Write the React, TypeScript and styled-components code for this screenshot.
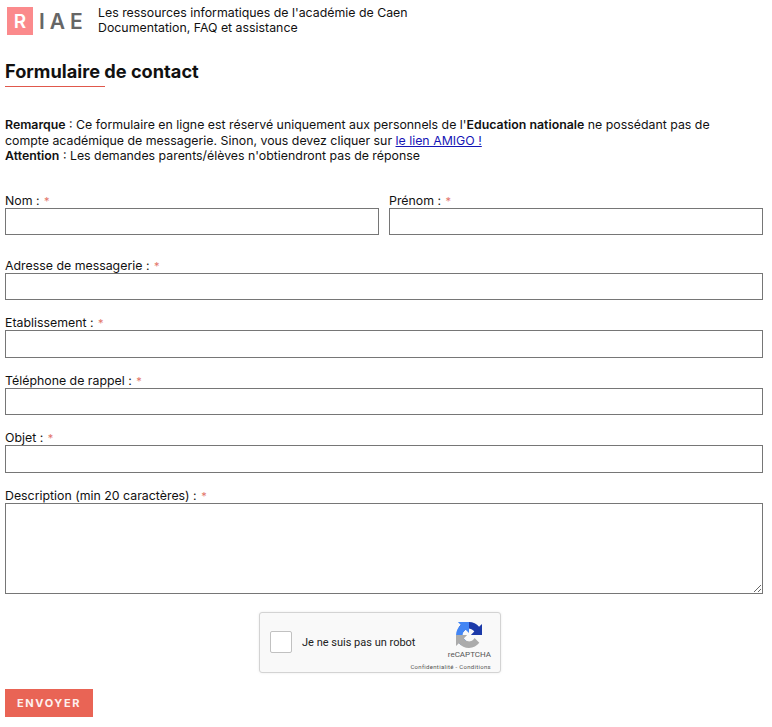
import React from 'react';
import styled, { createGlobalStyle } from 'styled-components';

const GlobalStyle = createGlobalStyle`
  html, body {
    margin: 0;
    padding: 0;
    background: #fff;
  }
  body {
    font-family: Inter, "Liberation Sans", sans-serif;
    font-size: 12.35px;
    color: #111;
  }
`;

const Page = styled.div`
  width: 772px;
  height: 727px;
  box-sizing: border-box;
  padding: 6px 9px 0 5px;
  overflow: hidden;
`;

const TopBar = styled.header`
  display: flex;
  align-items: flex-start;
  height: 29px;
`;

const Logo = styled.div`
  display: flex;
  align-items: center;
  width: 91px;
  padding-left: 2px;
  height: 28px;
  margin-top: 1px;
`;

const LogoSquare = styled.span`
  width: 26px;
  height: 28px;
  background: #fb8a8c;
  color: #fff;
  font-weight: 600;
  font-size: 19px;
  display: flex;
  align-items: center;
  justify-content: center;
`;

const LogoText = styled.span`
  margin-left: 6px;
  color: #666;
  font-weight: 600;
  font-size: 21px;
  letter-spacing: 5px;
`;

const Tagline = styled.div`
  font-size: 12.35px;
  line-height: 14.5px;
`;

const Title = styled.h1`
  margin: 24px 0 0;
  font-size: 18.2px;
  line-height: 24px;
  font-weight: 700;
  color: #111;
  padding-bottom: 3px;
`;

const TitleRule = styled.div`
  width: 100px;
  height: 1px;
  background: #e0584c;
`;

const Notice = styled.p`
  margin: 30px 0 0;
  line-height: 15.5px;
  font-size: 12.35px;
`;

const Strong = styled.strong`
  font-weight: 600;
`;

const NoticeLink = styled.a`
  color: #1515b5;
  text-decoration: underline;
`;

const Form = styled.form`
  margin-top: 28px;
  display: flex;
  flex-direction: column;
`;

const Row = styled.div<{ $wide?: boolean }>`
  display: flex;
  gap: 10px;
  margin-bottom: ${(p) => (p.$wide ? 22 : 14)}px;
`;

const Field = styled.label`
  display: flex;
  flex-direction: column;
  flex: 1;
  min-width: 0;
`;

const LabelText = styled.span`
  height: 15px;
  line-height: 17px;
  font-size: 12.35px;
  margin-bottom: 1px;
`;

const Star = styled.span`
  color: #e2746a;
  font-size: 11px;
  margin-left: 1px;
`;

const TextInput = styled.input<{ $tall?: boolean }>`
  box-sizing: border-box;
  width: 100%;
  height: ${(p) => (p.$tall ? 28 : 27)}px;
  border: 1px solid #767676;
  background: #fff;
  padding: 0 4px;
  margin: 0;
  outline: none;
`;

const TextArea = styled.textarea`
  display: block;
  box-sizing: border-box;
  width: 100%;
  height: 91px;
  border: 1px solid #767676;
  background: #fff;
  padding: 4px;
  margin: 0;
  outline: none;
`;

const CaptchaRow = styled.div`
  display: flex;
  justify-content: center;
  margin: 4px 8px 16px 0;
`;

const Captcha = styled.div`
  box-sizing: border-box;
  width: 242px;
  height: 61px;
  display: flex;
  align-items: center;
  background: #f9f9f9;
  border: 1px solid #d3d3d3;
  border-radius: 3px;
  box-shadow: 0 0 3px rgba(0, 0, 0, 0.08);
  font-family: Roboto, "Liberation Sans", sans-serif;
`;

const CaptchaBox = styled.span`
  box-sizing: border-box;
  width: 22px;
  height: 22px;
  margin-left: 10px;
  background: #fff;
  border: 1px solid #c1c1c1;
  border-radius: 2px;
`;

const CaptchaLabel = styled.span`
  margin-left: 10px;
  font-size: 11px;
  color: #222;
  white-space: nowrap;
  flex: 1;
`;

const CaptchaBrand = styled.div`
  display: flex;
  flex-direction: column;
  align-items: flex-end;
  padding: 9px 9px 0 0;
  height: 100%;
  width: 60px;
  box-sizing: border-box;
`;

const CaptchaMark = styled.svg`
  width: 26px;
  height: 26px;
  margin-right: 9px;
  flex: none;
`;

const BrandName = styled.span`
  font-size: 8px;
  line-height: 10px;
  margin-top: 2px;
  color: #555;
`;

const BrandLinks = styled.span`
  font-size: 6px;
  line-height: 9px;
  margin-top: 2px;
  letter-spacing: 0.3px;
  color: #555;
  white-space: nowrap;
`;

const SubmitButton = styled.button`
  width: 88px;
  height: 28px;
  border: 0;
  padding: 0;
  background: #e96455;
  color: #fdf0ee;
  font-family: Inter, "Liberation Sans", sans-serif;
  font-size: 11px;
  font-weight: 700;
  letter-spacing: 1.6px;
  text-transform: uppercase;
`;

const arrowPath =
  'M64 32l0-1.4V4.7l-7.2 7.2C50.9 4.7 42 .1 32 .1c-10.4 0-19.6 5-25.4 12.6l11.7 11.9a15.5 15.5 0 0 1 4.8-5.3c2-1.6 5-3 9-3 .5 0 .9.1 1.1.2 5 .4 9.3 3.1 11.8 7.1L36.7 32z';

const RecaptchaIcon: React.FC = () => (
  <CaptchaMark viewBox="0 0 64 64">
    <path d={arrowPath} fill="#1c3aa9" />
    <path d={arrowPath} fill="#4285f4" transform="rotate(-90 32 32)" />
    <path d={arrowPath} fill="#ababab" transform="rotate(180 32 32)" />
  </CaptchaMark>
);

const Required: React.FC<{ label: string }> = ({ label }) => (
  <LabelText>
    {label} : <Star>*</Star>
  </LabelText>
);

const App: React.FC = () => {
  return (
    <Page>
      <GlobalStyle />
      <TopBar>
        <Logo>
          <LogoSquare>R</LogoSquare>
          <LogoText>IAE</LogoText>
        </Logo>
        <Tagline>
          Les ressources informatiques de l'académie de Caen
          <br />
          Documentation, FAQ et assistance
        </Tagline>
      </TopBar>

      <Title>Formulaire de contact</Title>
      <TitleRule />

      <Notice>
        <Strong>Remarque</Strong> : Ce formulaire en ligne est réservé uniquement aux personnels de l'
        <Strong>Education nationale</Strong> ne possédant pas de
        <br />
        compte académique de messagerie. Sinon, vous devez cliquer sur{' '}
        <NoticeLink href="#">le lien AMIGO !</NoticeLink>
        <br />
        <Strong>Attention</Strong> : Les demandes parents/élèves n'obtiendront pas de réponse
      </Notice>

      <Form>
        <Row $wide>
          <Field>
            <Required label="Nom" />
            <TextInput />
          </Field>
          <Field>
            <Required label="Prénom" />
            <TextInput />
          </Field>
        </Row>
        <Row>
          <Field>
            <Required label="Adresse de messagerie" />
            <TextInput />
          </Field>
        </Row>
        <Row>
          <Field>
            <Required label="Etablissement" />
            <TextInput $tall />
          </Field>
        </Row>
        <Row>
          <Field>
            <Required label="Téléphone de rappel" />
            <TextInput />
          </Field>
        </Row>
        <Row>
          <Field>
            <Required label="Objet" />
            <TextInput $tall />
          </Field>
        </Row>
        <Row>
          <Field>
            <Required label="Description (min 20 caractères)" />
            <TextArea />
          </Field>
        </Row>
        <CaptchaRow>
          <Captcha>
            <CaptchaBox />
            <CaptchaLabel>Je ne suis pas un robot</CaptchaLabel>
            <CaptchaBrand>
              <RecaptchaIcon />
              <BrandName>reCAPTCHA</BrandName>
              <BrandLinks>Confidentialité - Conditions</BrandLinks>
            </CaptchaBrand>
          </Captcha>
        </CaptchaRow>
        <div>
          <SubmitButton type="button">Envoyer</SubmitButton>
        </div>
      </Form>
    </Page>
  );
};

export default App;
